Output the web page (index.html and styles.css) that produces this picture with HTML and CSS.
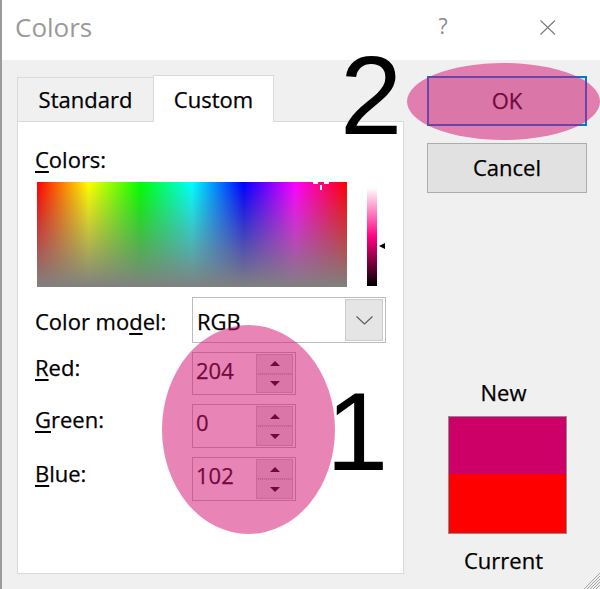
FILE: index.html
```html
<!DOCTYPE html>
<html>
<head>
<meta charset="utf-8">
<title>Colors</title>
<link rel="stylesheet" href="styles.css">
</head>
<body>
<div class="window">
  <div class="titlebar">
    <span class="title">Colors</span>
    <span class="help">?</span>
    <svg class="close" width="16" height="16" viewBox="0 0 16 16"><path d="M0.5 0.5 L15 14.5 M15 0.5 L0.5 14.5" stroke="#7a7a7a" stroke-width="1.1" fill="none"/></svg>
  </div>
  <div class="body">
    <div class="main">
      <div class="tabs">
        <div class="tab tab-std">Standard</div>
        <div class="tab tab-custom">Custom</div>
      </div>
      <div class="panel">
        <div class="label colors-label"><u>C</u>olors:</div>
        <div class="picker-row">
          <div class="spectrum">
            <span class="cross cross-l"></span>
            <span class="cross cross-r"></span>
            <span class="cross cross-v"></span>
          </div>
          <div class="lum"></div>
          <div class="lum-arrow"></div>
        </div>
        <div class="field model-row">
          <div class="label field-label model-label">Color mo<u>d</u>el:</div>
          <div class="select">
            <span class="select-value">RGB</span>
            <span class="drop"><svg width="17" height="9" viewBox="0 0 17 9"><polyline points="0.5,0.5 8.5,8 16.5,0.5" stroke="#5a5a5a" stroke-width="1.1" fill="none"/></svg></span>
          </div>
        </div>
        <div class="field spin-row row-red">
          <div class="label field-label"><u>R</u>ed:</div>
          <div class="spin">
            <span class="spin-value">204</span>
            <span class="spin-btns">
              <span class="spin-half"><svg width="10" height="5" viewBox="0 0 10 5"><polygon points="0,5 5,0 10,5" fill="#000"/></svg></span>
              <span class="spin-half"><svg width="10" height="5" viewBox="0 0 10 5"><polygon points="0,0 10,0 5,5" fill="#000"/></svg></span>
            </span>
          </div>
        </div>
        <div class="field spin-row row-green">
          <div class="label field-label"><u>G</u>reen:</div>
          <div class="spin">
            <span class="spin-value">0</span>
            <span class="spin-btns">
              <span class="spin-half"><svg width="10" height="5" viewBox="0 0 10 5"><polygon points="0,5 5,0 10,5" fill="#000"/></svg></span>
              <span class="spin-half"><svg width="10" height="5" viewBox="0 0 10 5"><polygon points="0,0 10,0 5,5" fill="#000"/></svg></span>
            </span>
          </div>
        </div>
        <div class="field spin-row row-blue">
          <div class="label field-label blue-label"><u>B</u>lue:</div>
          <div class="spin">
            <span class="spin-value">102</span>
            <span class="spin-btns">
              <span class="spin-half"><svg width="10" height="5" viewBox="0 0 10 5"><polygon points="0,5 5,0 10,5" fill="#000"/></svg></span>
              <span class="spin-half"><svg width="10" height="5" viewBox="0 0 10 5"><polygon points="0,0 10,0 5,5" fill="#000"/></svg></span>
            </span>
          </div>
        </div>
      </div>
    </div>
    <div class="side">
      <button class="btn btn-ok">OK</button>
      <button class="btn btn-cancel">Cancel</button>
      <div class="swatch-label new-label">New</div>
      <div class="swatch">
        <div class="sw-new"></div>
        <div class="sw-cur"></div>
      </div>
      <div class="swatch-label cur-label">Current</div>
    </div>
  </div>
  <svg class="grip" width="18" height="22" viewBox="0 0 18 22">
    <path d="M2 22 L18 6 M5 22 L18 9 M8 22 L18 12 M11 22 L18 15 M14 22 L18 18" stroke="#a5a5a5" stroke-width="1" fill="none"/>
  </svg>
  <div class="ann-ellipse ellipse-1"></div>
  <div class="ann-ellipse ellipse-2"></div>
  <div class="ann-num num-1">1</div>
  <div class="ann-num num-2">2</div>
</div>
</body>
</html>
```

FILE: styles.css
```css
* { box-sizing: border-box; }

html, body {
  margin: 0;
  padding: 0;
  background: #f0f0f0;
}

body {
  font-family: "Open Sans", "Liberation Sans", sans-serif;
  color: #000;
}

.window {
  position: relative;
  width: 600px;
  height: 589px;
  overflow: hidden;
  background: #f0f0f0;
  border-left: 2px solid #9b9b9b;
}

/* title bar */
.titlebar {
  height: 60px;
  background: #fff;
  display: flex;
  align-items: flex-start;
}

.title {
  flex: 1;
  margin: 9px 0 0 13px;
  font-size: 26px;
  line-height: 36px;
  color: #9a9a9a;
}

.help {
  width: 20px;
  margin-top: 12px;
  text-align: center;
  font-size: 21px;
  line-height: 28px;
  color: #8a8a8a;
}

.close {
  margin: 20px 44px 0 87px;
  width: 16px;
  height: 16px;
}

/* body */
.body {
  display: flex;
  align-items: flex-start;
}

.main {
  width: 387px;
  margin: 15px 0 0 15px;
}

.tabs {
  display: flex;
  align-items: flex-end;
  height: 46px;
}

.tab {
  font-size: 22px;
  line-height: 30px;
  text-align: center;
  -webkit-text-stroke: 0.25px #000;
}

.tab-std {
  width: 136px;
  height: 44px;
  padding-top: 6px;
  border-top: 1px solid #dadada;
  border-left: 1px solid #dadada;
}

.tab-custom {
  position: relative;
  z-index: 1;
  width: 121px;
  height: 47px;
  margin-bottom: -1px;
  padding-top: 8px;
  background: #fff;
  border: 1px solid #dadada;
  border-bottom: none;
}

.panel {
  height: 453px;
  background: #fff;
  border: 1px solid #dadada;
  padding: 22px 0 0 17px;
}

.label {
  font-size: 22px;
  line-height: 30px;
  -webkit-text-stroke: 0.25px #000;
}

.label u {
  text-decoration-thickness: 1.5px;
  text-underline-offset: 3px;
}

.picker-row {
  display: flex;
  align-items: flex-start;
  margin: 8px 0 0 2px;
}

.spectrum {
  position: relative;
  width: 310px;
  height: 105px;
  background:
    linear-gradient(to bottom, rgba(128, 128, 128, 0), #808080),
    linear-gradient(to right, #f00 0%, #ff0 16.67%, #0f0 33.33%, #0ff 50%, #00f 66.67%, #f0f 83.33%, #f00 100%);
}

.cross {
  position: absolute;
  background: #fff;
}

.cross-l { left: 276px; top: 0; width: 5px; height: 2px; }
.cross-r { left: 287px; top: 0; width: 5px; height: 2px; }
.cross-v { left: 283px; top: 3px; width: 2px; height: 5px; }

.lum {
  width: 10px;
  height: 98px;
  margin: 6px 0 0 20px;
  background: linear-gradient(to bottom, #fff 0%, #ff0080 50%, #000 100%);
}

.lum-arrow {
  width: 0;
  height: 0;
  margin: 61px 0 0 2px;
  border-right: 6px solid #000;
  border-top: 3.5px solid transparent;
  border-bottom: 3.5px solid transparent;
}

.field {
  display: flex;
  align-items: flex-start;
  margin-top: 9px;
}

.field-label {
  width: 157px;
  flex: none;
}

.model-row {
  margin-top: 10px;
}

.model-label {
  padding-top: 9px;
}

.blue-label {
  padding-top: 1px;
}

.select {
  display: flex;
  width: 194px;
  height: 46px;
  background: #fff;
  border: 1px solid #bcbcbc;
}

.select-value {
  flex: 1;
  padding: 8px 0 0 4px;
  font-size: 22px;
  line-height: 30px;
  -webkit-text-stroke: 0.25px #000;
}

.drop {
  display: flex;
  align-items: center;
  justify-content: center;
  width: 38px;
  height: 42px;
  margin: 1px 2px 1px 0;
  background: #e5e5e5;
  border: 1px solid #cccccc;
}

.spin {
  display: flex;
  width: 104px;
  height: 44px;
  background: #fff;
  border: 1px solid #b9b9b9;
}

.row-red .spin { height: 43px; }

.spin-value {
  flex: 1;
  padding: 2px 0 0 3px;
  font-size: 22px;
  line-height: 30px;
  -webkit-text-stroke: 0.25px #000;
}

.spin-btns {
  display: flex;
  flex-direction: column;
  width: 37px;
  margin: 1px 2px 1px 0;
}

.spin-half {
  flex: 1;
  display: flex;
  align-items: center;
  justify-content: center;
  background: #e1e1e1;
  border: 1px solid #c3c3c3;
}

.spin-half + .spin-half {
  border-top: 1px dotted #b0b0b0;
}

/* side column */
.side {
  width: 160px;
  margin-left: 23px;
  display: flex;
  flex-direction: column;
  align-items: center;
}

.btn {
  width: 160px;
  height: 50px;
  padding: 0 0 2px 0;
  font-family: "Open Sans", "Liberation Sans", sans-serif;
  font-size: 22px;
  line-height: 30px;
  color: #000;
  background: #e1e1e1;
  border: 1px solid #adadad;
  -webkit-text-stroke: 0.25px #000;
}

.btn-ok {
  margin-top: 16px;
  border: 2px solid #0078d7;
}

.btn-cancel {
  margin-top: 17px;
}

.swatch-label {
  font-size: 22px;
  line-height: 30px;
  margin-right: 7px;
  -webkit-text-stroke: 0.25px #000;
}

.new-label {
  margin-top: 184px;
}

.swatch {
  display: flex;
  flex-direction: column;
  width: 119px;
  height: 118px;
  margin-top: 9px;
  border: 1px solid #8c8c8c;
}

.sw-new {
  height: 57px;
  background: #cc0066;
}

.sw-cur {
  flex: 1;
  background: #ff0000;
}

.cur-label {
  margin-top: 11px;
}

/* overlays */
.grip {
  position: absolute;
  right: 0;
  bottom: 0;
}

.ann-ellipse {
  position: absolute;
  z-index: 5;
  border-radius: 50%;
  background: rgba(212, 20, 115, 0.52);
}

.ellipse-1 {
  left: 160px;
  top: 325px;
  width: 173px;
  height: 209px;
}

.ellipse-2 {
  left: 405px;
  top: 63px;
  width: 193px;
  height: 77px;
}

.ann-num {
  position: absolute;
  z-index: 6;
  font-family: "Liberation Sans", Arial, sans-serif;
  font-size: 112px;
  line-height: 112px;
  color: #000;
}

.num-1 {
  left: 324px;
  top: 376px;
}

.num-2 {
  left: 338px;
  top: 40px;
}
```
